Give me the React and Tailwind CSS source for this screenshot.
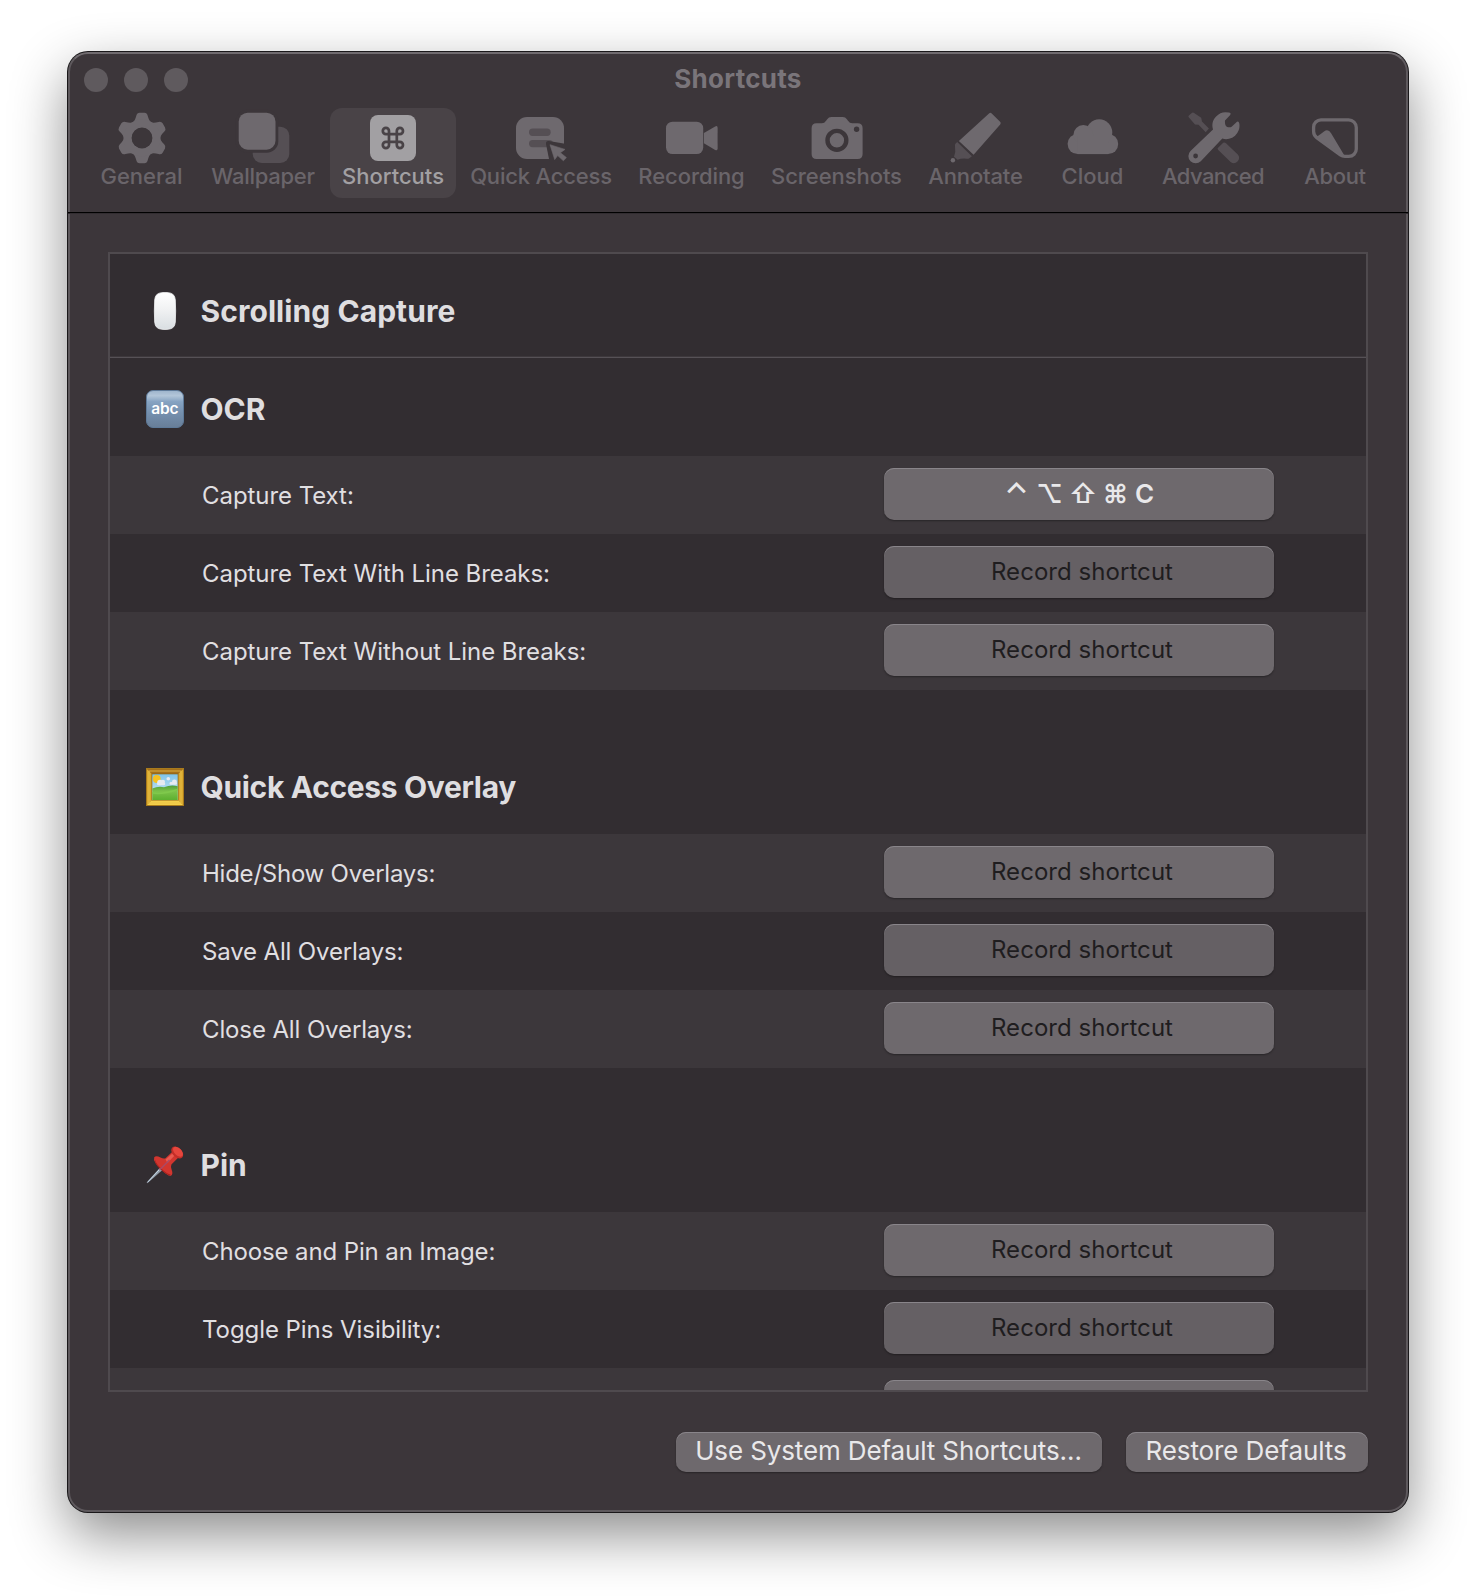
import React from "react";

const SOLID = "#6e696e";
const DIM = "#554f54";
const BASE = "#3c363a";

function GearIcon() {
  return (
    <g transform="translate(31 30)" fill={SOLID}>
      {[0, 60, 120, 180, 240, 300].map((a) => (
        <path
          key={a}
          transform={`rotate(${a})`}
          d="M-10.2-14.5C-7.4-17-6.6-18.8-5.7-22.3Q-5-25.2-2.4-25.2H2.4Q5-25.2 5.7-22.3C6.6-18.8 7.4-17 10.2-14.5Z"
        />
      ))}
      <circle r="14.3" fill="none" stroke={SOLID} strokeWidth="8.4" />
      <circle r="10.4" fill={BASE} />
    </g>
  );
}

function WallpaperIcon() {
  return (
    <g>
      <rect x="19.7" y="18.7" width="36.6" height="36.3" rx="9" fill={DIM} />
      <rect x="2.7" y="1.7" width="42.6" height="43" rx="11.5" fill={BASE} />
      <rect x="5.7" y="4.7" width="36.8" height="37" rx="9" fill={SOLID} />
    </g>
  );
}

function ShortcutsIcon() {
  return (
    <g>
      <rect x="7" y="7" width="46" height="46" rx="8" fill="#a2a0a3" />
      <path
        transform="translate(29.9 30)"
        d="M3.9-7v14a3.1 3.1 0 1 0 3.1-3.1h-14a3.1 3.1 0 1 0 3.1 3.1v-14a3.1 3.1 0 1 0-3.1 3.1h14a3.1 3.1 0 1 0-3.1-3.1"
        fill="none"
        stroke="#494347"
        strokeWidth="2.7"
        strokeLinejoin="round"
      />
    </g>
  );
}

function QuickAccessIcon() {
  return (
    <g>
      <rect x="5" y="9" width="48" height="42" rx="11" fill={SOLID} />
      <rect x="18" y="20.6" width="21.7" height="7.4" rx="3.7" fill={DIM} />
      <rect x="18" y="32" width="24" height="7.2" rx="3.6" fill={DIM} />
      <path d="M37.8 32.9L54 35.8V54H38.6L35 36Q34.6 32.6 37.8 32.9Z" fill={BASE} />
      <path
        d="M39 36.7L54 41.4L49.4 44.7L55.4 49.6L52.4 52.8L46.7 47.6L43.7 51.6Z"
        fill={SOLID}
        stroke={SOLID}
        strokeWidth="0.6"
        strokeLinejoin="round"
      />
    </g>
  );
}

function RecordingIcon() {
  return (
    <g fill={SOLID}>
      <rect x="4.6" y="13.7" width="37.2" height="32.4" rx="6.5" />
      <path d="M42.5 25L53.8 18.4Q56.2 17.2 56.2 19.8V40.6Q56.2 43.2 53.8 41.9L42.5 35.3Z" />
    </g>
  );
}

function ScreenshotsIcon() {
  return (
    <g>
      <path
        d="M10.2 15.3H15.5Q18 15.3 19.7 12.8L20.8 11.2Q22.3 9 25 9H36.3Q39 9 40.5 11.2L41.6 12.8Q43.3 15.3 45.8 15.3H51.2Q56.2 15.3 56.2 20.3V46Q56.2 51 51.2 51H10.2Q5.2 51 5.2 46V20.3Q5.2 15.3 10.2 15.3Z"
        fill={SOLID}
      />
      <circle cx="30.5" cy="32.3" r="9.4" fill="none" stroke={BASE} strokeWidth="4.4" />
      <circle cx="50.2" cy="21.3" r="2.7" fill={BASE} />
    </g>
  );
}

function AnnotateIcon() {
  return (
    <g>
      <path
        d="M43.6 5.5Q45 4.2 46.3 5.5L54.7 13.8Q56 15.1 54.8 16.5L28.2 46.7L13.5 33Z"
        fill={SOLID}
      />
      <path
        d="M11.8 33.9L26.5 48.3L24 50.2Q22.8 50.9 21 50.7Q15.5 50.3 12.2 51.8L8.6 48.7Q10.6 44 9.6 38.5Q9.3 36.5 10.2 35.5Z"
        fill={DIM}
      />
      <circle cx="7.5" cy="52.3" r="2.2" fill={SOLID} />
    </g>
  );
}

function CloudIcon() {
  return (
    <g fill={SOLID}>
      <circle cx="15.3" cy="36" r="10.1" />
      <circle cx="45.7" cy="36" r="10.1" />
      <circle cx="36.8" cy="24.4" r="13.1" />
      <circle cx="20.9" cy="27" r="9.9" />
      <rect x="15" y="28" width="31" height="18.1" />
    </g>
  );
}

function AdvancedIcon() {
  return (
    <g>
      <path
        d="M5.3 9.3Q4.6 8.3 5.5 7.5L8.7 4.8Q9.7 4.2 10.7 4.9L17.8 9.8L18.6 13.4L25.5 20.4L22.3 24.2L15.2 16.8L11.6 16.6Z"
        fill={DIM}
      />
      <path
        d="M34.2 40.2L39.8 34.8Q41.2 34.2 42.6 35.2L54.4 46.6A5.2 5.2 0 0 1 47.2 54L34.6 41.8Z"
        fill={DIM}
      />
      <path
        d="M7.1 43L29.6 21.5A13.4 13.4 0 0 1 45.6 4.6Q48.3 5.2 46.6 7.2L41.6 12.4Q41.2 17.8 43.8 19Q46.8 19.8 48.2 18.8L53.6 13.8Q55.3 12.8 55.9 15.4A13.4 13.4 0 0 1 38.9 30.6L17.4 53.2A7.2 7.2 0 0 1 7.1 43Z"
        fill={SOLID}
      />
      <circle cx="12.2" cy="48" r="2.4" fill={BASE} />
    </g>
  );
}

function AboutIcon() {
  return (
    <g>
      <path
        d="M15.6 11.8H43.2A7.7 7.7 0 0 1 50.9 19.5V41A7.4 7.4 0 0 1 43.5 48.4H39.5Q37 48.4 35 46.9L11.6 30Q8.2 27.3 8.2 23.5V19.2A7.4 7.4 0 0 1 15.6 11.8Z"
        fill="none"
        stroke={SOLID}
        strokeWidth="3.3"
      />
      <path
        d="M11 28.4Q12.8 28.4 14.6 26.6L18.6 23.4Q22.9 20.6 25.7 25.2L37.8 45.5Q38.4 46.8 39.6 47.6L34 46Z"
        fill={SOLID}
      />
    </g>
  );
}

const TABS = [
  { label: "General", icon: GearIcon, box: "w-[110px]", text: "pl-px" },
  { label: "Wallpaper", icon: WallpaperIcon, box: "w-[134px]", text: "tracking-[-0.28px]" },
  { label: "Shortcuts", icon: ShortcutsIcon, box: "w-[126px]", text: "", active: true },
  { label: "Quick Access", icon: QuickAccessIcon, box: "w-[170px]", text: "tracking-[-0.19px]" },
  { label: "Recording", icon: RecordingIcon, box: "w-[131px]", text: "tracking-[-0.07px]", half: true },
  { label: "Screenshots", icon: ScreenshotsIcon, box: "w-[159px]", text: "tracking-[-0.07px]", half: true },
  { label: "Annotate", icon: AnnotateIcon, box: "w-[119px]", text: "tracking-[-0.16px]", half: true },
  { label: "Cloud", icon: CloudIcon, box: "w-[115px]", text: "", half: true },
  { label: "Advanced", icon: AdvancedIcon, box: "w-[127px]", text: "tracking-[-0.55px] pr-px", half: true },
  { label: "About", icon: AboutIcon, box: "w-[117px]", text: "tracking-[-0.38px] pr-px", half: true },
];

function Tab({ label, icon: Icon, box, text, active, half }) {
  return (
    <div
      className={`flex h-[90px] shrink-0 flex-col items-center rounded-xl ${box} ${
        active ? "bg-[#494347] text-[#a2a0a3]" : "text-[#6a656a]"
      }`}
    >
      <svg width="60" height="58" viewBox={half ? "0.6 0 60 58" : "0 0 60 58"} className="shrink-0">
        <Icon />
      </svg>
      <span className={`text-[22px] leading-5 font-medium whitespace-nowrap ${text}`}>{label}</span>
    </div>
  );
}

function MouseEmoji() {
  return (
    <svg width="38" height="38" viewBox="0 0 38 38">
      <defs>
        <linearGradient id="mouse" x1="0" y1="0" x2="0" y2="1">
          <stop offset="0" stopColor="#ffffff" />
          <stop offset="0.45" stopColor="#f1f2f3" />
          <stop offset="1" stopColor="#d9dee2" />
        </linearGradient>
      </defs>
      <path
        d="M15.5 .7Q19 .1 22.5 .7Q28.8 1.2 29.3 8Q30 19 29.3 30Q28.8 36.8 22.5 37.2Q19 37.7 15.5 37.2Q9.2 36.8 8.7 30Q8 19 8.7 8Q9.2 1.2 15.5 .7Z"
        fill="url(#mouse)"
        stroke="#f4f5f6"
        strokeWidth="0.8"
      />
    </svg>
  );
}

function AbcEmoji() {
  return (
    <svg width="38" height="38" viewBox="0 0 38 38">
      <defs>
        <linearGradient id="abc" x1="0" y1="0" x2="0" y2="1">
          <stop offset="0" stopColor="#9db4cc" />
          <stop offset="0.14" stopColor="#b3c6d9" />
          <stop offset="0.3" stopColor="#86a3c2" />
          <stop offset="0.6" stopColor="#7590ae" />
          <stop offset="1" stopColor="#687e98" />
        </linearGradient>
      </defs>
      <rect x="0.5" y="0.5" width="37" height="37" rx="6.5" fill="url(#abc)" stroke="#5e7a99" />
      <text
        x="18.8"
        y="24"
        textAnchor="middle"
        fill="#ffffff"
        className="font-['Inter',sans-serif] text-[15.5px] font-semibold tracking-[-0.2px]"
      >
        abc
      </text>
    </svg>
  );
}

function FrameEmoji() {
  return (
    <svg width="38" height="38" viewBox="0 0 38 38">
      <defs>
        <linearGradient id="sky" x1="0" y1="0" x2="0" y2="1">
          <stop offset="0" stopColor="#7fc4ea" />
          <stop offset="1" stopColor="#d9edf7" />
        </linearGradient>
        <linearGradient id="grass" x1="0" y1="0" x2="0" y2="1">
          <stop offset="0" stopColor="#4f9e3a" />
          <stop offset="0.4" stopColor="#7cc24a" />
          <stop offset="1" stopColor="#5cb02f" />
        </linearGradient>
      </defs>
      <rect width="38" height="38" fill="#a87a1c" />
      <path d="M1 1L6 6V32L1 37Z" fill="#d9a92f" />
      <path d="M37 1L32 6V32L37 37Z" fill="#d9a92f" />
      <path d="M1 1H37L32 6H6Z" fill="#a5701b" />
      <path d="M1 37L6 32H32L37 37Z" fill="#f3cf4a" />
      <rect x="3" y="3" width="32" height="32" fill="none" stroke="#e9c04a" strokeWidth="0.8" />
      <rect x="5.5" y="5.5" width="27" height="27" fill="#8a6418" />
      <rect x="6.3" y="6.3" width="25.4" height="25.7" fill="url(#sky)" />
      <circle cx="10.8" cy="11" r="3.9" fill="#f6c21f" />
      <g fill="#e6eaf1">
        <circle cx="14" cy="14.5" r="2.8" />
        <circle cx="17" cy="13.8" r="2" />
        <rect x="11" y="14.3" width="8.2" height="3" rx="1.5" />
        <circle cx="22.3" cy="10.8" r="1.8" />
        <circle cx="28.4" cy="13.8" r="2.4" />
        <rect x="23.5" y="14" width="7.5" height="2.8" rx="1.4" />
      </g>
      <path d="M6.3 20.6Q12 17.8 18 19.2Q25 16.3 31.7 18.2V32H6.3Z" fill="url(#grass)" />
      <path d="M6.3 24Q16 25.8 31.7 20.8V22.2Q17 27.5 6.3 25.8Z" fill="#7fc94c" />
    </svg>
  );
}

function PinEmoji() {
  return (
    <svg width="38" height="38" viewBox="0 0 38 38">
      <path d="M14.5 21L17 23.5L1.4 37.2L.6 36.6Z" fill="#8f9aa6" />
      <path d="M15 21.800L2 35.900" stroke="#cfe2f0" strokeWidth="0.9" />
      <path
        d="M8.2 11.2Q10.2 9.2 14.5 11.6Q17.5 13 19.5 12.3L26.6 5.6L32.4 11.6L25.4 18.4Q24.4 20.3 25.8 24.2Q27.3 28 25 29.7Q22 30.5 16 24.3Q6.5 15.5 8.2 11.2Z"
        fill="#d2362f"
      />
      <path
        d="M9 13.5Q10 18 16 23.3Q21 28 24.8 28.6Q23.6 30.2 20.5 28Q17 26 13.5 22.5Q8.5 17.5 9 13.5Z"
        fill="#a8231f"
      />
      <path d="M19.5 13.5L26.5 7.6L28.6 9.5L21.5 17Z" fill="#ea5a50" />
      <ellipse cx="31.2" cy="6.5" rx="7" ry="4.6" transform="rotate(45 31.2 6.5)" fill="#c42e28" />
      <ellipse cx="32" cy="5.7" rx="6" ry="3.6" transform="rotate(45 32 5.7)" fill="#e6463d" />
      <path d="M13.5 24L23.500 14" stroke="#a84a68" strokeWidth="1.4" />
    </svg>
  );
}

function SectionHeader({ icon: Icon, title, box, inner, text }) {
  return (
    <div className={`flex shrink-0 items-end pl-9 ${box}`}>
      <div className={`flex items-center ${inner}`}>
        <Icon />
        <h2
          className={`ml-4 pb-px pl-[0.5px] text-[30px] leading-9 font-bold whitespace-nowrap text-[#dfdee0] ${text ?? ""}`}
        >
          {title}
        </h2>
      </div>
    </div>
  );
}

function KeyCombo() {
  return (
    <div className="flex text-[26px] leading-8 font-semibold text-[#e9e8ea]">
      <span className="w-[31px] text-center text-[31px] font-medium">⌃</span>
      <span className="w-[35px] text-center">⌥</span>
      <span className="w-8 text-center">⇧</span>
      <span className="w-[33px] text-center">⌘</span>
      <span className="w-[25px] text-center">C</span>
    </div>
  );
}

function Row({ label, text, shaded, combo, empty }) {
  return (
    <div
      className={`flex h-[78px] shrink-0 items-start justify-between pt-3 pr-[92px] pl-[92px] ${
        shaded ? "bg-[#3c373b]" : "bg-[#322d31]"
      }`}
    >
      <span className={`text-[24px] leading-[56px] whitespace-nowrap text-[#e0dfe1] ${text ?? "tracking-[-0.06px]"}`}>
        {label}
      </span>
      <div
        className={`flex h-[52px] w-[390px] items-center justify-center rounded-[10px] shadow-[inset_0_1px_0_#89858a,0_1px_2px_rgba(0,0,0,0.35)] ${
          shaded ? "bg-[#6e696d]" : "bg-[#656064]"
        }`}
      >
        {combo && <KeyCombo />}
        {!combo && !empty && (
          <span className="pl-1.5 text-[24px] leading-8 tracking-[0.05px] text-[#1f1d1f]">Record shortcut</span>
        )}
      </div>
    </div>
  );
}

function PushButton({ children, box }) {
  return (
    <button
      className={`flex h-10 items-center justify-center rounded-[10px] bg-[#6e696d] pb-0.5 text-[26px] leading-8 whitespace-nowrap text-[#e9e8ea] shadow-[inset_0_1px_0_#89858a,0_1px_2px_rgba(0,0,0,0.35)] ${box}`}
    >
      {children}
    </button>
  );
}

export default function App() {
  return (
    <div className="h-[1596px] w-[1476px] overflow-hidden bg-white pt-[52px] pl-[68px] font-['Inter','Liberation_Sans',sans-serif]">
      <div className="flex h-[1460px] w-[1340px] flex-col rounded-[20px] border-2 border-[#5e595d] border-t-[#706b6f] bg-[#3c363a] shadow-[0_0_0_1px_#1a181a,0_22px_56px_rgba(0,0,0,0.46)]">
        <header className="-mx-0.5 h-[159px] shrink-0 border-b border-black px-0.5 shadow-[0_1px_0_#322d31]">
          <div className="flex h-[50px] items-center">
            <div className="flex w-[400px] gap-4 pt-0.5 pl-3.5">
              <span className="size-6 rounded-full bg-[#5f5a5e]" />
              <span className="size-6 rounded-full bg-[#5f5a5e]" />
              <span className="size-6 rounded-full bg-[#5f5a5e]" />
            </div>
            <h1 className="flex-1 text-center text-[26px] leading-8 font-bold tracking-[0.28px] text-[#7a757a]">
              Shortcuts
            </h1>
            <div className="w-[400px]" />
          </div>
          <nav className="mt-1 flex pl-4">
            {TABS.map((t) => (
              <Tab key={t.label} {...t} />
            ))}
          </nav>
        </header>

        <main className="mx-[38px] mt-[39px] flex h-[1140px] shrink-0 flex-col overflow-hidden border-2 border-[#4f4a4e] bg-[#322d31]">
          <SectionHeader icon={MouseEmoji} title="Scrolling Capture" box="h-[102px]" inner="h-[90px]" text="tracking-[0.06px]" />
          <div className="h-0.5 shrink-0 border-b border-[#565156] bg-[#3d383c]" />
          <SectionHeader icon={AbcEmoji} title="OCR" box="h-[98px]" inner="h-[94px]" />
          <Row shaded label="Capture Text:" combo />
          <Row label="Capture Text With Line Breaks:" />
          <Row shaded label="Capture Text Without Line Breaks:" />
          <SectionHeader
            icon={FrameEmoji}
            title="Quick Access Overlay"
            box="h-[144px]"
            inner="h-[94px]"
            text="tracking-[-0.33px]"
          />
          <Row shaded label="Hide/Show Overlays:" text="tracking-[-0.24px]" />
          <Row label="Save All Overlays:" text="tracking-[-0.15px]" />
          <Row shaded label="Close All Overlays:" text="tracking-[-0.12px]" />
          <SectionHeader icon={PinEmoji} title="Pin" box="h-[144px]" inner="h-[94px]" />
          <Row shaded label="Choose and Pin an Image:" text="tracking-[-0.12px]" />
          <Row label="Toggle Pins Visibility:" />
          <Row shaded empty />
        </main>

        <footer className="mt-10 mr-[38px] flex justify-end gap-6">
          <PushButton box="w-[426px] pr-px tracking-[-0.13px]">Use System Default Shortcuts…</PushButton>
          <PushButton box="w-[242px] pr-0.5 tracking-[-0.1px]">Restore Defaults</PushButton>
        </footer>
      </div>
    </div>
  );
}
